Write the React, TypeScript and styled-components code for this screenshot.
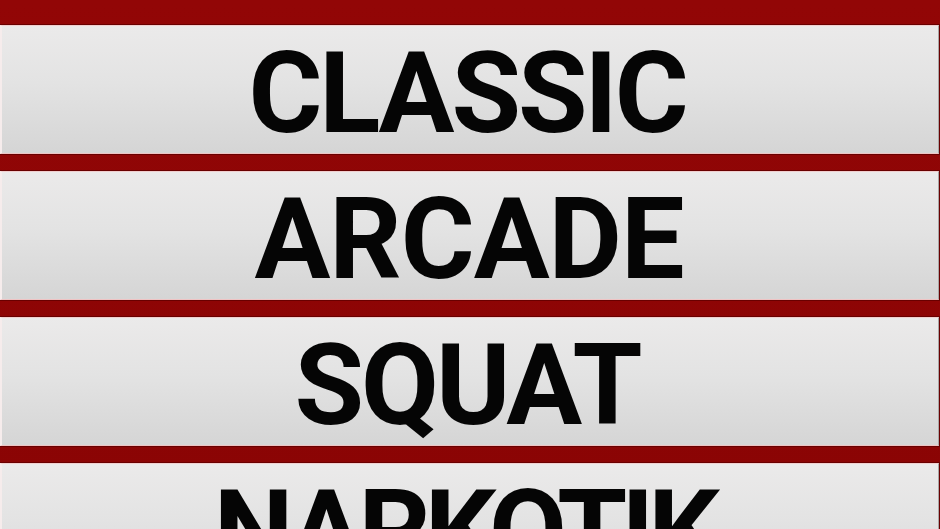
import React, { FC } from 'react'
import styled, { createGlobalStyle } from 'styled-components'

const modes = [
  { label: 'CLASSIC', tracking: -3 },
  { label: 'ARCADE', tracking: -1 },
  { label: 'SQUAT', tracking: -3 },
  { label: 'NARKOTIK', tracking: -6 },
]

const GlobalStyle = createGlobalStyle`
  html, body {
    margin: 0;
    padding: 0;
    height: 100%;
    overflow: hidden;
    background: #8e0505;
  }
  #root {
    height: 100%;
  }
`

const App: FC = () => {
  return (
    <>
      <GlobalStyle />
      <Screen>
        <Menu>
          {modes.map(mode => (
            <li key={mode.label}>
              <ModeButton type="button" $tracking={mode.tracking}>
                {mode.label}
              </ModeButton>
            </li>
          ))}
        </Menu>
      </Screen>
    </>
  )
}

export default App

const Screen = styled.div`
  width: 940px;
  height: 529px;
  overflow: hidden;
  background: linear-gradient(#920606, #8a0404);
`
const Menu = styled.ul`
  display: flex;
  flex-direction: column;
  gap: 17px;
  margin: 0;
  padding: 25px 0 0;
  list-style: none;
`
// trailing letter-spacing pushes the ink right, pad the right side to keep it centred
const ModeButton = styled.button<{ $tracking: number }>`
  display: flex;
  align-items: center;
  justify-content: center;
  box-sizing: border-box;
  width: 939px;
  height: 129px;
  margin: 0;
  padding: 8px ${p => -p.$tracking * 2}px 0 0;
  border: 0;
  border-top: 1px solid #f1cfcf;
  border-bottom: 1px solid #efc3c3;
  border-left: 2px solid #f6ecec;
  border-right: 1px solid #a9a6a6;
  box-shadow: 0 0 0 1px #690000;
  background: linear-gradient(#ebeaea, #e3e3e3 45%, #d5d5d5);
  color: #050505;
  font-family: Roboto, 'Liberation Sans', sans-serif;
  font-size: 113px;
  font-weight: 700;
  line-height: 1;
  letter-spacing: ${p => p.$tracking}px;
  cursor: pointer;
`
